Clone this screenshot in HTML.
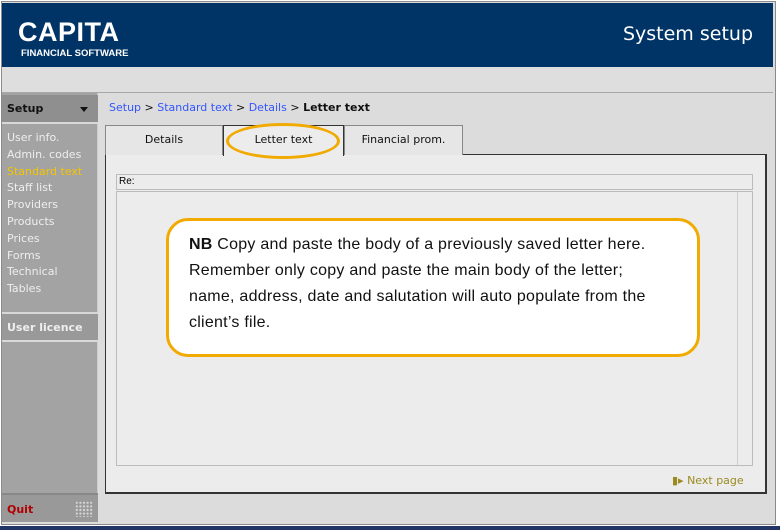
<!DOCTYPE html>
<html><head><style>
*{margin:0;padding:0;box-sizing:border-box}
body{width:780px;height:530px;background:#fff;font-family:"DejaVu Sans","Liberation Sans",sans-serif;position:relative;overflow:hidden}
.frame{position:absolute;left:1px;top:1px;width:775px;height:524px;border:1px solid #8a8a8a;background:#dcdcdc}
.hdr{position:absolute;left:2px;top:3px;width:771px;height:64px;background:#003466}
.logo{position:absolute;left:16px;top:14px;color:#fff;font-family:"Liberation Sans",sans-serif;font-weight:bold;font-size:27px;letter-spacing:0.5px}
.sub{position:absolute;left:19px;top:45px;color:#fff;font-family:"Liberation Sans",sans-serif;font-weight:bold;font-size:9.5px}
.title{position:absolute;right:20px;top:20px;color:#fff;font-size:19px}
.bar{position:absolute;left:2px;top:67px;width:771px;height:26px;background:#dedede;border-bottom:1px solid #a8a8a8}
.side{position:absolute;left:2px;top:93px;width:96px;height:429px;background:#a3a3a3;border-right:1px solid #ccc}
.sh{position:absolute;left:0;top:2px;width:96px;height:29px;background:#8f8f8f;border-bottom:2px solid #d8d8d8}
.sh b{position:absolute;left:5px;top:7px;font-size:11px;color:#111}
.sh i{position:absolute;left:78px;top:12px;border-left:4px solid transparent;border-right:4px solid transparent;border-top:5px solid #111}
.menu{position:absolute;left:5px;top:37px;font-size:11px;line-height:16.8px;color:#eee}
.ul{position:absolute;left:0;top:219px;width:96px;height:30px;border-top:2px solid #d8d8d8;border-bottom:2px solid #d8d8d8;background:#999}
.ul b{position:absolute;left:5px;top:7px;font-size:11px;color:#eee}
.quit{position:absolute;left:0;top:400px;width:96px;height:29px;border-top:2px solid #888;background:#999}
.quit b{position:absolute;left:5px;top:8px;color:#b00000;font-size:11px}
.dots{position:absolute;left:73px;top:6px;width:18px;height:16px;background:radial-gradient(circle,#d8d8d8 1px,transparent 1.2px) 0 0/3.6px 3.6px}
.crumb{position:absolute;left:109px;top:101px;font-size:11px;color:#3355ff}
.crumb b{color:#111}.crumb span{color:#111}
.tab{position:absolute;top:125px;height:30px;background:#e6e6e6;border:1px solid #888;border-bottom:none;font-size:11px;color:#111;text-align:center;line-height:28px}
.panel{position:absolute;left:105px;top:154px;width:662px;height:340px;border:1px solid #333;border-right:2px solid #333;border-bottom:2px solid #333;background:#ececec}
.re{position:absolute;left:116px;top:174px;width:637px;height:16px;border:1px solid #bbb;font-size:10px;padding-left:2px;line-height:14px;font-family:"Liberation Sans",sans-serif}
.ta{position:absolute;left:116px;top:191px;width:637px;height:275px;border:1px solid #bbb}
.sb{position:absolute;right:0;top:0;width:15px;height:273px;border-left:1px solid #ccc}
.call{position:absolute;left:166px;top:218px;width:534px;height:139px;background:#fff;border:3px solid #f0aa00;border-radius:22px;font-family:"Liberation Sans",sans-serif;font-size:16px;letter-spacing:0.25px;line-height:26px;padding:11px 0 0 20px;color:#111;white-space:nowrap}
.oval{position:absolute;left:226px;top:123px;width:114px;height:36px;border:3px solid #f0aa00;border-radius:50%}
.next{position:absolute;left:672px;top:474px;font-size:11px;color:#9b8a20}
.bl{position:absolute;left:0;top:526px;width:780px;height:4px;background:#223366}
</style></head><body>
<div class="frame"></div>
<div class="hdr"><div class="logo">CAPITA</div><div class="sub">FINANCIAL SOFTWARE</div><div class="title">System setup</div></div>
<div class="bar"></div>
<div class="side">
<div class="sh"><b>Setup</b><i></i></div>
<div class="menu">User info.<br>Admin. codes<br><span style="color:#f5c400">Standard text</span><br>Staff list<br>Providers<br>Products<br>Prices<br>Forms<br>Technical<br>Tables</div>
<div class="ul"><b>User licence</b></div>
<div class="quit"><b>Quit</b><div class="dots"></div></div>
</div>
<div class="crumb">Setup <span>&gt;</span> Standard text <span>&gt;</span> Details <span>&gt;</span> <b>Letter text</b></div>
<div class="panel"></div>
<div class="tab" style="left:105px;width:118px">Details</div>
<div class="tab" style="left:223px;width:121px;height:31px;background:#ececec;border-color:#333">Letter text</div>
<div class="tab" style="left:344px;width:119px">Financial prom.</div>
<div class="oval"></div>
<div class="re">Re:</div>
<div class="ta"><div class="sb"></div></div>
<div class="call"><b>NB</b> Copy and paste the body of a previously saved letter here.<br>Remember only copy and paste the main body of the letter;<br>name, address, date and salutation will auto populate from the<br>client’s file.</div>
<div class="next">▮▸ Next page</div>
<div class="bl"></div>
</body></html>
